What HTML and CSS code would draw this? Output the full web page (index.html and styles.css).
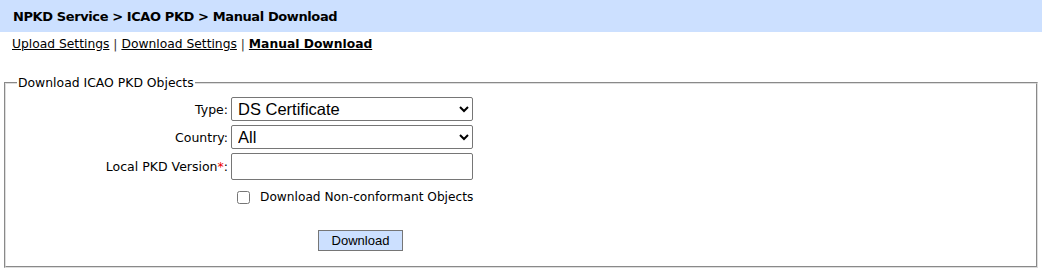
FILE: index.html
```html
<!DOCTYPE html>
<html lang="en">
<head>
    <meta charset="UTF-8">
    <title>Manual Download</title>
    <link rel="stylesheet" href="styles.css">
</head>
<body>
    <div class="title-bar">NPKD Service &gt; ICAO PKD &gt; Manual Download</div>

    <div class="sub-nav">
        <a href="#">Upload Settings</a> | <a href="#">Download Settings</a> | <a href="#" class="current">Manual Download</a>
    </div>

    <fieldset class="box">
        <legend>Download ICAO PKD Objects</legend>

        <div class="form-grid">
            <label for="type">Type:</label>
            <select id="type" class="field">
                <option>DS Certificate</option>
            </select>

            <label for="country">Country:</label>
            <select id="country" class="field">
                <option>All</option>
            </select>

            <label for="version">Local PKD Version<span class="req">*</span>:</label>
            <input type="text" id="version" class="field text-field">

            <span></span>
            <div class="check-row">
                <input type="checkbox" id="nonconf">
                <label for="nonconf">Download Non-conformant Objects</label>
            </div>
        </div>

        <div class="actions">
            <button class="dl-btn">Download</button>
        </div>
    </fieldset>
</body>
</html>
```

FILE: styles.css
```css
* {
    box-sizing: border-box;
}
body {
    margin: 0;
    font-family: "DejaVu Sans", Verdana, sans-serif;
    font-size: 12.5px;
    color: #000;
    background: #fff;
}
.title-bar {
    background: #cce0ff;
    height: 32px;
    line-height: 33px;
    padding-left: 13px;
    font-size: 13px;
    font-weight: bold;
    letter-spacing: -0.4px;
}
.sub-nav {
    padding: 5px 12px 0;
    line-height: 15px;
    font-size: 12.3px;
    color: #333;
}
.sub-nav a {
    color: #000;
}
.sub-nav a.current {
    font-weight: bold;
}
.box {
    margin: 23px 4px 0;
    padding: 0 10px 14px;
    border: 2px groove #ddd;
    height: 193px;
}
.box legend {
    padding: 0 1px;
    margin-left: 1px;
    font-size: 12.4px;
}
.form-grid {
    display: grid;
    grid-template-columns: 215px 242px;
    row-gap: 4px;
    align-items: center;
    margin-top: 7px;
}
.form-grid > label {
    text-align: right;
    padding-right: 3px;
}
.req {
    color: #e00;
}
.field {
    font-family: "Liberation Sans", Arial, sans-serif;
    font-size: 16.5px;
    height: 24px;
    border: 1px solid #767676;
    border-radius: 2px;
    background: #fff;
    padding: 0 2px;
}
.text-field {
    height: 27px;
}
.check-row {
    display: flex;
    align-items: center;
    gap: 10px;
    padding: 6px 0 0 6px;
    white-space: nowrap;
    font-size: 12.2px;
}
.check-row input {
    margin: 0;
    width: 13px;
    height: 13px;
}
.actions {
    padding: 26px 0 0 302px;
}
.dl-btn {
    font-family: "Liberation Sans", Arial, sans-serif;
    font-size: 13px;
    width: 85px;
    height: 21px;
    background: #cce0ff;
    border: 1px solid #767676;
    padding: 0;
}
```
